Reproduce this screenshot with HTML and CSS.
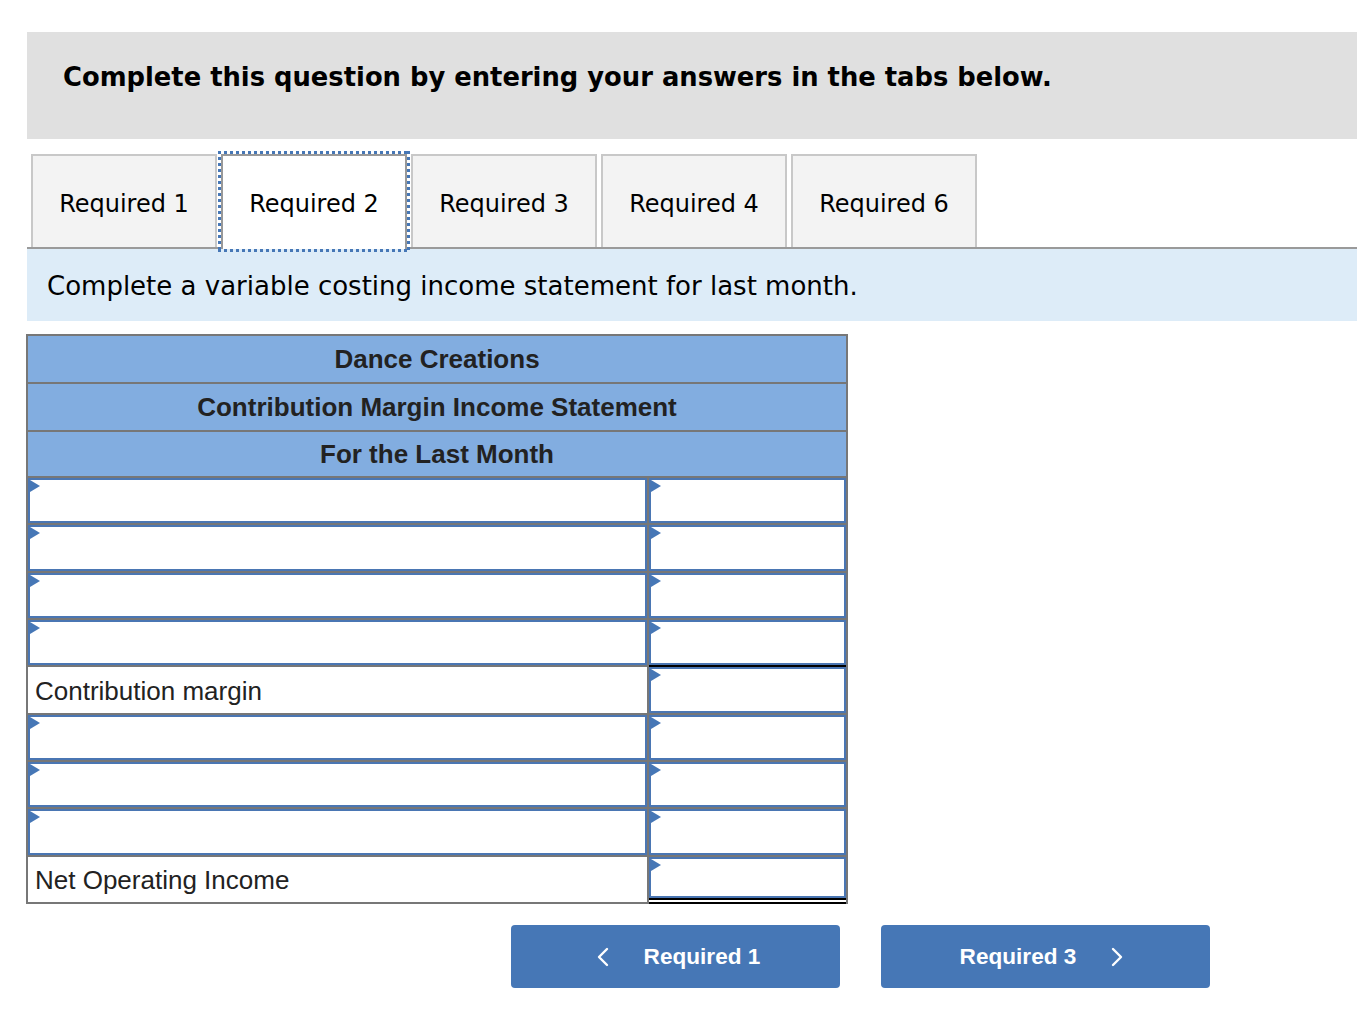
FILE: index.html
```html
<!DOCTYPE html>
<html lang="en">
<head>
<meta charset="utf-8">
<title>Required 2</title>
<link rel="stylesheet" href="styles.css">
</head>
<body>
<div class="page">
  <div class="banner"><h1 class="banner-title">Complete this question by entering your answers in the tabs below.</h1></div>

  <div class="tabs">
    <div class="tab">Required 1</div>
    <div class="tab active">Required 2</div>
    <div class="tab">Required 3</div>
    <div class="tab">Required 4</div>
    <div class="tab">Required 6</div>
  </div>

  <div class="prompt">Complete a variable costing income statement for last month.</div>

  <div class="statement">
    <div class="head">Dance Creations</div>
    <div class="head">Contribution Margin Income Statement</div>
    <div class="head head-last">For the Last Month</div>

    <div class="row">
      <div class="cell label"><div class="input"></div></div>
      <div class="cell amount"><div class="input"></div></div>
    </div>
    <div class="row">
      <div class="cell label"><div class="input"></div></div>
      <div class="cell amount"><div class="input"></div></div>
    </div>
    <div class="row">
      <div class="cell label"><div class="input"></div></div>
      <div class="cell amount"><div class="input"></div></div>
    </div>
    <div class="row">
      <div class="cell label"><div class="input"></div></div>
      <div class="cell amount subtotal"><div class="input"></div></div>
    </div>
    <div class="row">
      <div class="cell label text">Contribution margin</div>
      <div class="cell amount"><div class="input"></div></div>
    </div>
    <div class="row">
      <div class="cell label"><div class="input"></div></div>
      <div class="cell amount"><div class="input"></div></div>
    </div>
    <div class="row">
      <div class="cell label"><div class="input"></div></div>
      <div class="cell amount"><div class="input"></div></div>
    </div>
    <div class="row">
      <div class="cell label"><div class="input"></div></div>
      <div class="cell amount"><div class="input"></div></div>
    </div>
    <div class="row">
      <div class="cell label text">Net Operating Income</div>
      <div class="cell amount total"><div class="input"></div></div>
    </div>
  </div>

  <div class="nav">
    <button class="btn btn-prev">
      <svg class="chev" viewBox="0 0 12 20" width="12" height="20"><path d="M10 2 L2 10 L10 18" fill="none" stroke="#fff" stroke-width="2.4" stroke-linecap="round" stroke-linejoin="round"/></svg>
      <span>Required 1</span>
    </button>
    <button class="btn btn-next">
      <span>Required 3</span>
      <svg class="chev" viewBox="0 0 12 20" width="12" height="20"><path d="M2 2 L10 10 L2 18" fill="none" stroke="#fff" stroke-width="2.4" stroke-linecap="round" stroke-linejoin="round"/></svg>
    </button>
  </div>
</div>
</body>
</html>
```

FILE: styles.css
```css
html, body {
  margin: 0;
  padding: 0;
  background: #fff;
}

.page {
  padding: 32px 0 0 27px;
  font-family: "DejaVu Sans", Verdana, sans-serif;
  color: #000;
}

.banner {
  background: #e0e0e0;
  height: 107px;
  box-sizing: border-box;
  padding: 30px 0 0 36px;
}

.banner-title {
  margin: 0;
  font-size: 25.8px;
  line-height: 30px;
  font-weight: bold;
  white-space: nowrap;
}

.tabs {
  margin-top: 15px;
  display: flex;
  gap: 4px;
  padding-left: 4px;
  border-bottom: 2px solid #9a9a9a;
  height: 93px;
}

.tab {
  position: relative;
  width: 186px;
  height: 93px;
  box-sizing: border-box;
  background: #f3f3f3;
  border: 2px solid #c8c8c8;
  border-bottom: none;
  display: flex;
  align-items: center;
  justify-content: center;
  font-size: 24px;
  padding-top: 4px;
  color: #000;
}

.tab.active {
  background: #fff;
  border-color: #999;
  height: 95px;
  margin-bottom: -2px;
  padding-bottom: 2px;
}

.tab.active::after {
  content: "";
  position: absolute;
  top: -5px;
  left: -5px;
  right: -5px;
  bottom: -3px;
  background:
    repeating-linear-gradient(90deg, #4677b6 0 3px, transparent 3px 6px) top left / 100% 3px no-repeat,
    repeating-linear-gradient(90deg, #4677b6 0 3px, transparent 3px 6px) bottom left / 100% 3px no-repeat,
    repeating-linear-gradient(180deg, #4677b6 0 3px, transparent 3px 6px) top left / 3px 100% no-repeat,
    repeating-linear-gradient(180deg, #4677b6 0 3px, transparent 3px 6px) top right / 3px 100% no-repeat;
}

.prompt {
  background: #ddecf8;
  height: 72px;
  box-sizing: border-box;
  padding: 2px 0 0 20px;
  display: flex;
  align-items: center;
  font-size: 26px;
}

.statement {
  margin: 13px 0 0 -1px;
  width: 822px;
  box-sizing: border-box;
  border-left: 2px solid #777;
  border-right: 2px solid #777;
  border-top: 2px solid #777;
  font-family: "Liberation Sans", Arial, sans-serif;
  color: #222;
}

.head {
  background: #82ade0;
  height: 46px;
  border-bottom: 2px solid #777;
  display: flex;
  align-items: center;
  justify-content: center;
  font-weight: bold;
  font-size: 26px;
}

.head-last {
  height: 44px;
}

.row {
  display: flex;
}

.cell {
  height: 45.35px;
  border-bottom: 2px solid #777;
}

.label {
  width: 619px;
  border-right: 2px solid #777;
}

.amount {
  flex: 1;
}

.subtotal {
  border-bottom-color: #000;
}

.total {
  height: 41.35px;
  border-bottom: 6px double #000;
}

.text {
  display: flex;
  align-items: center;
  padding-left: 7px;
  box-sizing: border-box;
  height: 47.35px;
  font-size: 26px;
  padding-top: 2px;
  width: 621px;
}

.input {
  position: relative;
  height: 100%;
  box-sizing: border-box;
  border: 2px solid #4a76b3;
  background: #fff;
}

.input::before {
  content: "";
  position: absolute;
  top: 0;
  left: 0;
  width: 0;
  height: 0;
  border-left: 10px solid #4677b6;
  border-top: 6px solid transparent;
  border-bottom: 6px solid transparent;
}

.nav {
  margin-top: 21px;
  padding-left: 484px;
  display: flex;
  gap: 41px;
}

.btn {
  width: 329px;
  height: 63px;
  box-sizing: border-box;
  border: none;
  border-radius: 4px;
  background: #4677b6;
  color: #fff;
  font-family: "Liberation Sans", Arial, sans-serif;
  font-weight: bold;
  font-size: 22.6px;
  display: flex;
  align-items: center;
  justify-content: center;
  gap: 35px;
  padding: 0;
  cursor: pointer;
}

.btn-prev {
  padding-left: 6px;
}

.btn-next {
  padding-right: 8px;
}

.chev {
  display: block;
}
```
